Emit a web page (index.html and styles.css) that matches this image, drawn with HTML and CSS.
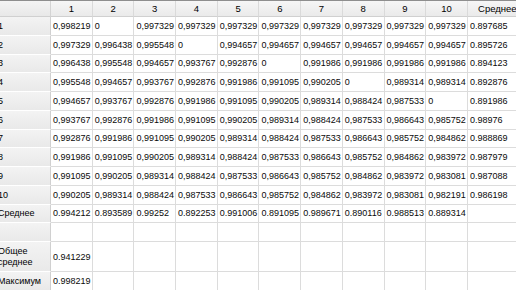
FILE: index.html
```html
<!DOCTYPE html>
<html lang="ru">
<head>
<meta charset="utf-8">
<title>Таблица</title>
<link rel="stylesheet" href="styles.css">
</head>
<body>
<div class="view">
  <div class="grid" id="grid">
    <div class="corner"></div>
    <div class="ch">1</div><div class="ch">2</div><div class="ch">3</div><div class="ch">4</div><div class="ch">5</div>
    <div class="ch">6</div><div class="ch">7</div><div class="ch">8</div><div class="ch">9</div><div class="ch">10</div>
    <div class="ch">Среднее</div>

    <div class="rh">1</div>
    <div class="c">0,998219</div><div class="c">0</div><div class="c">0,997329</div><div class="c">0,997329</div><div class="c">0,997329</div><div class="c">0,997329</div><div class="c">0,997329</div><div class="c">0,997329</div><div class="c">0,997329</div><div class="c">0,997329</div><div class="c">0.897685</div>

    <div class="rh">2</div>
    <div class="c">0,997329</div><div class="c">0,996438</div><div class="c">0,995548</div><div class="c">0</div><div class="c">0,994657</div><div class="c">0,994657</div><div class="c">0,994657</div><div class="c">0,994657</div><div class="c">0,994657</div><div class="c">0,994657</div><div class="c">0.895726</div>

    <div class="rh">3</div>
    <div class="c">0,996438</div><div class="c">0,995548</div><div class="c">0,994657</div><div class="c">0,993767</div><div class="c">0,992876</div><div class="c">0</div><div class="c">0,991986</div><div class="c">0,991986</div><div class="c">0,991986</div><div class="c">0,991986</div><div class="c">0.894123</div>

    <div class="rh">4</div>
    <div class="c">0,995548</div><div class="c">0,994657</div><div class="c">0,993767</div><div class="c">0,992876</div><div class="c">0,991986</div><div class="c">0,991095</div><div class="c">0,990205</div><div class="c">0</div><div class="c">0,989314</div><div class="c">0,989314</div><div class="c">0.892876</div>

    <div class="rh">5</div>
    <div class="c">0,994657</div><div class="c">0,993767</div><div class="c">0,992876</div><div class="c">0,991986</div><div class="c">0,991095</div><div class="c">0,990205</div><div class="c">0,989314</div><div class="c">0,988424</div><div class="c">0,987533</div><div class="c">0</div><div class="c">0.891986</div>

    <div class="rh">6</div>
    <div class="c">0,993767</div><div class="c">0,992876</div><div class="c">0,991986</div><div class="c">0,991095</div><div class="c">0,990205</div><div class="c">0,989314</div><div class="c">0,988424</div><div class="c">0,987533</div><div class="c">0,986643</div><div class="c">0,985752</div><div class="c">0.98976</div>

    <div class="rh">7</div>
    <div class="c">0,992876</div><div class="c">0,991986</div><div class="c">0,991095</div><div class="c">0,990205</div><div class="c">0,989314</div><div class="c">0,988424</div><div class="c">0,987533</div><div class="c">0,986643</div><div class="c">0,985752</div><div class="c">0,984862</div><div class="c">0.988869</div>

    <div class="rh">8</div>
    <div class="c">0,991986</div><div class="c">0,991095</div><div class="c">0,990205</div><div class="c">0,989314</div><div class="c">0,988424</div><div class="c">0,987533</div><div class="c">0,986643</div><div class="c">0,985752</div><div class="c">0,984862</div><div class="c">0,983972</div><div class="c">0.987979</div>

    <div class="rh">9</div>
    <div class="c">0,991095</div><div class="c">0,990205</div><div class="c">0,989314</div><div class="c">0,988424</div><div class="c">0,987533</div><div class="c">0,986643</div><div class="c">0,985752</div><div class="c">0,984862</div><div class="c">0,983972</div><div class="c">0,983081</div><div class="c">0.987088</div>

    <div class="rh">10</div>
    <div class="c">0,990205</div><div class="c">0,989314</div><div class="c">0,988424</div><div class="c">0,987533</div><div class="c">0,986643</div><div class="c">0,985752</div><div class="c">0,984862</div><div class="c">0,983972</div><div class="c">0,983081</div><div class="c">0,982191</div><div class="c">0.986198</div>

    <div class="rh">Среднее</div>
    <div class="c">0.994212</div><div class="c">0.893589</div><div class="c">0.99252</div><div class="c">0.892253</div><div class="c">0.991006</div><div class="c">0.891095</div><div class="c">0.989671</div><div class="c">0.890116</div><div class="c">0.988513</div><div class="c">0.889314</div><div class="c"></div>

    <div class="rh"></div>
    <div class="c"></div><div class="c"></div><div class="c"></div><div class="c"></div><div class="c"></div><div class="c"></div><div class="c"></div><div class="c"></div><div class="c"></div><div class="c"></div><div class="c"></div>

    <div class="rh wrap">Общее<br>среднее</div>
    <div class="c">0.941229</div><div class="c"></div><div class="c"></div><div class="c"></div><div class="c"></div><div class="c"></div><div class="c"></div><div class="c"></div><div class="c"></div><div class="c"></div><div class="c"></div>

    <div class="rh">Максимум</div>
    <div class="c">0.998219</div><div class="c"></div><div class="c"></div><div class="c"></div><div class="c"></div><div class="c"></div><div class="c"></div><div class="c"></div><div class="c"></div><div class="c"></div><div class="c"></div>
  </div>
</div>
</body>
</html>
```

FILE: styles.css
```css
html, body {
  margin: 0;
  padding: 0;
  background: #ffffff;
  overflow: hidden;
}

.view {
  width: 516px;
  height: 290px;
  overflow: hidden;
  border-top: 1px solid #8e8e8e;
  box-sizing: border-box;
}

.grid {
  display: grid;
  margin-left: -4px;
  grid-template-columns: 55px repeat(10, 41.7px) 60px;
  grid-template-rows: 16px repeat(11, 18.75px) 18.6px 30.4px 19px;
  font-family: "Liberation Sans", Arial, sans-serif;
  font-size: 9px;
  color: #0a0a0a;
}

.grid > div {
  box-sizing: border-box;
  display: flex;
  align-items: center;
  white-space: nowrap;
  overflow: hidden;
}

.corner {
  background: linear-gradient(#f4f4f4, #e8e8e8);
  border-right: 1px solid #d4d4d4;
  border-bottom: 1px solid #d0d0d0;
}

.ch {
  justify-content: center;
  font-size: 9.5px;
  background: linear-gradient(#f6f6f6, #eaeaea);
  border-right: 1px solid #dadada;
  border-bottom: 1px solid #d0d0d0;
  color: #000;
}

.rh {
  padding-left: 2px;
  background: linear-gradient(#f3f3f3, #e9e9e9);
  border-bottom: 1px solid #ffffff;
  border-right: 1px solid #d0d0d0;
  color: #000;
}

.rh.wrap {
  white-space: normal;
  line-height: 11px;
}

.c {
  padding-left: 2px;
  border-right: 1px solid #dcdcdc;
  border-bottom: 1px solid #dcdcdc;
}
```
